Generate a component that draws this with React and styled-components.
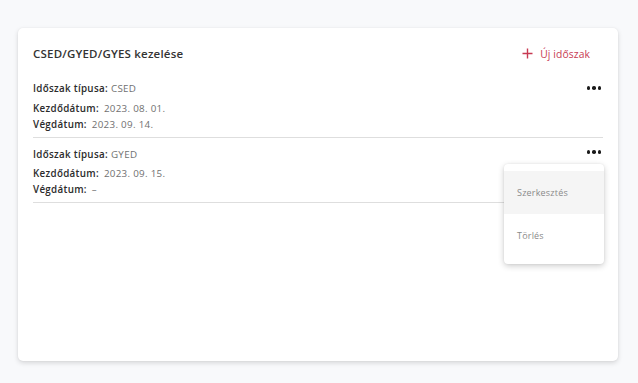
import React from "react";
import styled, { createGlobalStyle } from "styled-components";

const Global = createGlobalStyle`
  html, body { margin: 0; padding: 0; background: #f8f9fb; }
  body { font-family: "Open Sans", "Liberation Sans", sans-serif; }
  * { box-sizing: border-box; }
`;

const Page = styled.div`
  width: 638px;
  height: 383px;
  padding: 28px 20px 22px 18px;
  background: #f8f9fb;
`;

const Card = styled.section`
  background: #fff;
  border-radius: 5px;
  box-shadow: 0 2px 5px rgba(0, 0, 0, 0.14), 0 0 2px rgba(0, 0, 0, 0.06);
  height: 333px;
  padding: 16px 15px 0 15px;
`;

const Header = styled.div`
  display: flex;
  align-items: center;
  justify-content: space-between;
  height: 19px;
  margin-bottom: 18px;
`;

const Title = styled.h2`
  margin: 0;
  font-size: 11.5px;
  font-weight: 600;
  letter-spacing: 0.2px;
  color: #333;
`;

const AddButton = styled.button`
  display: flex;
  align-items: center;
  gap: 7px;
  border: none;
  background: none;
  padding: 0;
  margin-right: 13px;
  font-family: "Open Sans", sans-serif;
  font-size: 10.3px;
  letter-spacing: 0.1px;
  color: #c73a52;
  cursor: pointer;
`;

const Period = styled.div`
  position: relative;
  border-bottom: 1px solid #dedede;
  padding: 0 0 4px 0;
  & + & { padding-top: 9px; }
`;

const Line = styled.div`
  display: flex;
  align-items: baseline;
  gap: ${(p) => (p.$wide ? "5px" : "3px")};
  height: ${(p) => p.$h || 16}px;
  line-height: 16px;
  font-size: 9.8px;
  letter-spacing: 0.3px;
`;

const Label = styled.span`
  font-weight: 600;
  color: #2b2b2b;
`;

const Value = styled.span`
  color: #707070;
  font-weight: 400;
`;

const MoreButton = styled.button`
  position: absolute;
  right: 2px;
  top: ${(p) => p.$top}px;
  border: none;
  background: none;
  padding: 0;
  display: flex;
  gap: 2px;
  cursor: pointer;
`;

const Dot = styled.span`
  width: 3.5px;
  height: 3.5px;
  border-radius: 50%;
  background: #1b1b1b;
`;

const Menu = styled.ul`
  position: absolute;
  right: -1px;
  top: ${(p) => p.$top}px;
  width: 100px;
  margin: 0;
  padding: 7px 0;
  list-style: none;
  background: #fff;
  border-radius: 4px;
  box-shadow: 0 2px 6px rgba(0, 0, 0, 0.2), 0 0 2px rgba(0, 0, 0, 0.08);
  z-index: 5;
`;

const MenuItem = styled.li`
  height: 43px;
  display: flex;
  align-items: center;
  padding-left: 13px;
  font-size: 9px;
  letter-spacing: 0.2px;
  color: #8a8a8a;
  background: ${(p) => (p.$active ? "#f5f5f5" : "transparent")};
`;

const Plus = () => (
  <svg width="11" height="11" viewBox="0 0 11 11">
    <path d="M5.5 0.5v10M0.5 5.5h10" stroke="#c73a52" strokeWidth="1.4" />
  </svg>
);

const Dots = ({ top }) => (
  <MoreButton $top={top} aria-label="Műveletek">
    <Dot />
    <Dot />
    <Dot />
  </MoreButton>
);

export default function App() {
  return (
    <>
      <Global />
      <Page>
        <Card>
          <Header>
            <Title>CSED/GYED/GYES kezelése</Title>
            <AddButton>
              <Plus />
              Új időszak
            </AddButton>
          </Header>
          <Period>
            <Line $h={20}>
              <Label>Időszak típusa:</Label>
              <Value>CSED</Value>
            </Line>
            <Line $wide>
              <Label>Kezdődátum:</Label>
              <Value>2023. 08. 01.</Value>
            </Line>
            <Line $wide>
              <Label>Végdátum:</Label>
              <Value>2023. 09. 14.</Value>
            </Line>
            <Dots top={5} />
          </Period>
          <Period>
            <Line $h={19}>
              <Label>Időszak típusa:</Label>
              <Value>GYED</Value>
            </Line>
            <Line $wide>
              <Label>Kezdődátum:</Label>
              <Value>2023. 09. 15.</Value>
            </Line>
            <Line $wide>
              <Label>Végdátum:</Label>
              <Value>–</Value>
            </Line>
            <Dots top={12} />
            <Menu $top={26}>
              <MenuItem $active>Szerkesztés</MenuItem>
              <MenuItem>Törlés</MenuItem>
            </Menu>
          </Period>
        </Card>
      </Page>
    </>
  );
}
